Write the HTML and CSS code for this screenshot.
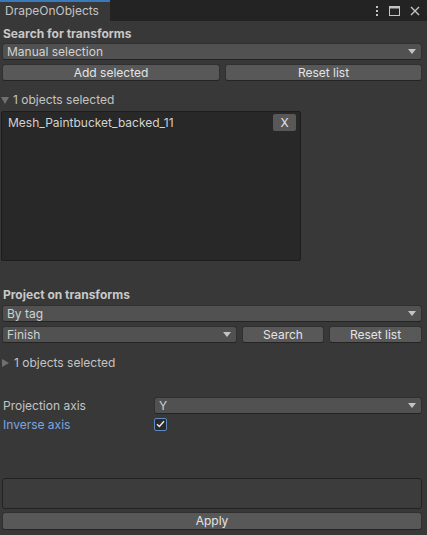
FILE: index.html
```html
<!DOCTYPE html>
<html>
<head>
<meta charset="utf-8">
<link rel="stylesheet" href="styles.css">
</head>
<body>
<div class="window">
  <div class="tabbar">
    <div class="tab">DrapeOnObjects</div>
    <div class="tab-icons">
      <svg width="4" height="12" viewBox="0 0 4 12"><rect x="1" y="1" width="2" height="2" fill="#c4c4c4"/><rect x="1" y="5" width="2" height="2" fill="#c4c4c4"/><rect x="1" y="9" width="2" height="2" fill="#c4c4c4"/></svg>
      <svg width="11" height="10" viewBox="0 0 11 10"><rect x="0.5" y="0.5" width="10" height="9" fill="none" stroke="#c4c4c4"/><rect x="0.5" y="0.5" width="10" height="2" fill="#c4c4c4"/></svg>
      <svg width="10" height="10" viewBox="0 0 10 10"><path d="M1 1L9 9M9 1L1 9" stroke="#c4c4c4" stroke-width="1.4"/></svg>
    </div>
  </div>
  <div class="content">
    <div class="header h1">Search for transforms</div>
    <div class="dropdown full">Manual selection<span class="arrow"></span></div>
    <div class="row r1">
      <div class="btn add">Add selected</div>
      <div class="btn grow">Reset list</div>
    </div>
    <div class="foldout f1"><span class="tri-down"></span>1 objects selected</div>
    <div class="listbox">
      <div class="item"><span>Mesh_Paintbucket_backed_11</span><div class="xbtn">X</div></div>
    </div>
    <div class="header h2">Project on transforms</div>
    <div class="dropdown full">By tag<span class="arrow"></span></div>
    <div class="row r1">
      <div class="dropdown tagdd">Finish<span class="arrow"></span></div>
      <div class="btn search">Search</div>
      <div class="btn reset2">Reset list</div>
    </div>
    <div class="foldout f2"><span class="tri-right"></span>1 objects selected</div>
    <div class="field r-axis">
      <div class="label">Projection axis</div>
      <div class="dropdown axisdd">Y<span class="arrow"></span></div>
    </div>
    <div class="field r-inv">
      <div class="label blue">Inverse axis</div>
      <div class="check"><svg width="9" height="8" viewBox="0 0 9 8"><path d="M1 4.2L3.4 6.5L8 1.3" fill="none" stroke="#e8e8e8" stroke-width="1.5"/></svg></div>
    </div>
    <div class="textbox"></div>
    <div class="btn apply">Apply</div>
  </div>
</div>
</body>
</html>
```

FILE: styles.css
```css
html, body {
  margin: 0;
  padding: 0;
  background: #383838;
}
body {
  width: 427px;
  height: 535px;
  overflow: hidden;
  font-family: Inter, "Noto Sans", sans-serif;
  font-size: 12px;
  color: #c4c4c4;
}
.window {
  display: flex;
  flex-direction: column;
  height: 535px;
}
.tabbar {
  height: 21px;
  background: #232323;
  display: flex;
  justify-content: space-between;
  align-items: stretch;
  flex: none;
}
.tab {
  width: 110px;
  box-sizing: border-box;
  background: #383838;
  border-top: 2px solid #3a79bb;
  padding-left: 5px;
  line-height: 18px;
  color: #c4c4c4;
  font-size: 12px;
}
.tab-icons {
  display: flex;
  align-items: center;
  gap: 10px;
  padding-right: 7px;
  padding-top: 1px;
}
.content {
  flex: 1;
  display: flex;
  flex-direction: column;
  padding: 0 5px 0 2px;
  position: relative;
}
.header {
  font-weight: 700;
  line-height: 18px;
  padding-left: 1px;
  color: #c8c8c8;
}
.h1 { margin-top: 4px; margin-bottom: 0; }
.h2 { margin-top: 25px; margin-bottom: 1px; }
.dropdown {
  position: relative;
  height: 17px;
  box-sizing: border-box;
  background: #515151;
  border: 1px solid #303030;
  border-bottom-color: #242424;
  border-radius: 3px;
  line-height: 15px;
  padding-left: 4px;
  color: #d2d2d2;
}
.arrow {
  position: absolute;
  right: 5px;
  top: 5px;
  width: 0;
  height: 0;
  border-left: 4px solid transparent;
  border-right: 4px solid transparent;
  border-top: 5px solid #c4c4c4;
}
.row {
  display: flex;
  gap: 5px;
}
.r1 { margin-top: 4px; }
.btn {
  height: 17px;
  box-sizing: border-box;
  background: #585858;
  border: 1px solid #303030;
  border-bottom-color: #242424;
  border-radius: 3px;
  text-align: center;
  line-height: 15px;
  color: #e4e4e4;
}
.add { width: 218px; flex: none; }
.grow { flex: 1; }
.foldout {
  display: flex;
  align-items: center;
  line-height: 18px;
  color: #c4c4c4;
}
.f1 { margin-top: 10px; margin-left: -1px; }
.f2 { margin-top: 11px; margin-left: -1px; }
.tri-down {
  width: 0; height: 0;
  border-left: 4px solid transparent;
  border-right: 4px solid transparent;
  border-top: 7px solid #707070;
  margin-right: 4px;
  margin-top: 1px;
}
.tri-right {
  width: 0; height: 0;
  border-top: 4px solid transparent;
  border-bottom: 4px solid transparent;
  border-left: 7px solid #707070;
  margin-right: 5px;
  margin-left: 1px;
}
.listbox {
  margin-top: 2px;
  margin-left: -1px;
  width: 300px;
  height: 150px;
  box-sizing: border-box;
  background: #282828;
  border: 1px solid #1d1d1d;
  border-radius: 2px;
  padding: 1px 4px 0 6px;
}
.item {
  display: flex;
  justify-content: space-between;
  align-items: center;
  height: 18px;
  color: #d2d2d2;
}
.xbtn {
  width: 23px;
  height: 17px;
  background: #585858;
  border-radius: 2px;
  text-align: center;
  line-height: 17px;
  color: #e4e4e4;
}
.tagdd { width: 235px; flex: none; }
.search { width: 82px; flex: none; }
.reset2 { flex: 1; }
.field {
  display: flex;
  align-items: center;
  height: 18px;
}
.r-axis { margin-top: 24px; }
.r-inv { margin-top: 1px; }
.label {
  width: 151px;
  padding-left: 1px;
  flex: none;
}
.blue { color: #7aa6e0; }
.axisdd { flex: 1; }
.check {
  width: 13px;
  height: 13px;
  box-sizing: border-box;
  background: #2a2a2a;
  border: 1px solid #5f8ac4;
  border-radius: 2px;
  display: flex;
  align-items: center;
  justify-content: center;
}
.textbox {
  margin-top: 45px;
  height: 31px;
  box-sizing: border-box;
  background: #3c3c3c;
  border: 1px solid #222222;
  border-radius: 3px;
}
.apply {
  margin-top: 3px;
  height: 18px;
}
```
